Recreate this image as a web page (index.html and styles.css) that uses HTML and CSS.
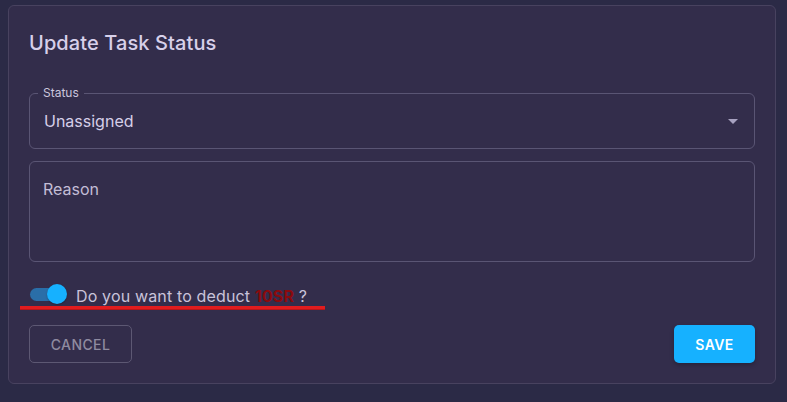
FILE: index.html
```html
<!DOCTYPE html>
<html lang="en">
<head>
<meta charset="utf-8">
<title>Update Task Status</title>
<link rel="stylesheet" href="styles.css">
</head>
<body>
<div class="backdrop">
  <div class="dialog">
    <h2 class="dialog-title">Update Task Status</h2>
    <div class="form">
      <div class="field select-field">
        <span class="field-label">Status</span>
        <span class="field-value">Unassigned</span>
        <svg class="caret" width="10" height="5" viewBox="0 0 10 5"><path d="M0 0h10L5 5z" fill="#a7a1c0"/></svg>
      </div>
      <div class="field textarea-field">
        <span class="placeholder">Reason</span>
      </div>
      <div class="toggle-row">
        <span class="switch"><span class="track"></span><span class="thumb"></span></span>
        <span class="toggle-text">Do you want to deduct <b class="amount">10SR</b> ?</span>
        <span class="annotation"></span>
      </div>
    </div>
    <div class="actions">
      <button class="btn btn-outline">CANCEL</button>
      <button class="btn btn-primary">SAVE</button>
    </div>
  </div>
</div>
</body>
</html>
```
FILE: styles.css
```css
* { box-sizing: border-box; }
html, body {
  margin: 0;
  background: #2b2a46;
  font-family: Inter, "Noto Sans", sans-serif;
}
.backdrop {
  width: 787px;
  height: 402px;
  padding: 5px 11px 0 8px;
}
.dialog {
  width: 768px;
  background: #332d4b;
  border: 1px solid #48425f;
  border-radius: 6px;
  padding: 22px 20px 20px 20px;
}
.dialog-title {
  margin: 0;
  font-size: 20px;
  line-height: 30px;
  font-weight: 500;
  letter-spacing: 0.1px;
  color: #d7d0ea;
}
.form {
  margin-top: 35px;
}
.field {
  position: relative;
  border: 1px solid #5a5574;
  border-radius: 6px;
}
.select-field {
  height: 56px;
  display: flex;
  align-items: center;
  padding: 0 16px 0 14px;
}
.field-label {
  position: absolute;
  left: 8px;
  top: -9px;
  padding: 0 5px;
  background: #332d4b;
  font-size: 12px;
  line-height: 16px;
  color: #cbc5dd;
}
.field-value {
  flex: 1;
  font-size: 16px;
  line-height: 24px;
  color: #d6cfe8;
}
.caret { display: block; }
.textarea-field {
  margin-top: 12px;
  height: 101px;
  padding: 15px 13px;
}
.placeholder {
  font-size: 16px;
  line-height: 24px;
  color: #c3bdd6;
}
.toggle-row {
  position: relative;
  margin-top: 22px;
  height: 24px;
  display: flex;
  align-items: center;
  gap: 9px;
}
.switch {
  position: relative;
  width: 38px;
  height: 24px;
  flex: none;
}
.track {
  position: absolute;
  left: 1px;
  top: 4px;
  width: 34px;
  height: 13px;
  border-radius: 7px;
  background: #2a6ea8;
}
.thumb {
  position: absolute;
  left: 18px;
  top: 0px;
  width: 20px;
  height: 20px;
  border-radius: 50%;
  background: #16b1ff;
  box-shadow: 0 1px 2px rgba(0,0,0,0.25);
}
.toggle-text {
  font-size: 16px;
  line-height: 24px;
  letter-spacing: 0.15px;
  color: #c9c3da;
}
.amount {
  font-weight: 700;
  color: #8a0a0e;
}
.annotation {
  position: absolute;
  left: -9px;
  top: 22px;
  width: 305px;
  height: 4px;
  background: #e11c1e;
  border-bottom: 1px solid #b8161a;
}
.actions {
  margin-top: 17px;
  display: flex;
  justify-content: space-between;
}
.btn {
  height: 38px;
  border-radius: 5px;
  font-family: Inter, "Noto Sans", sans-serif;
  font-size: 14px;
  letter-spacing: 0.4px;
  cursor: pointer;
}
.btn-outline {
  width: 103px;
  background: transparent;
  border: 1px solid #5d5873;
  color: #8f8ba0;
  font-weight: 500;
}
.btn-primary {
  width: 81px;
  background: #16b1ff;
  border: none;
  color: #ffffff;
  font-weight: 600;
  box-shadow: 0 2px 4px rgba(0,0,0,0.25);
}
```
